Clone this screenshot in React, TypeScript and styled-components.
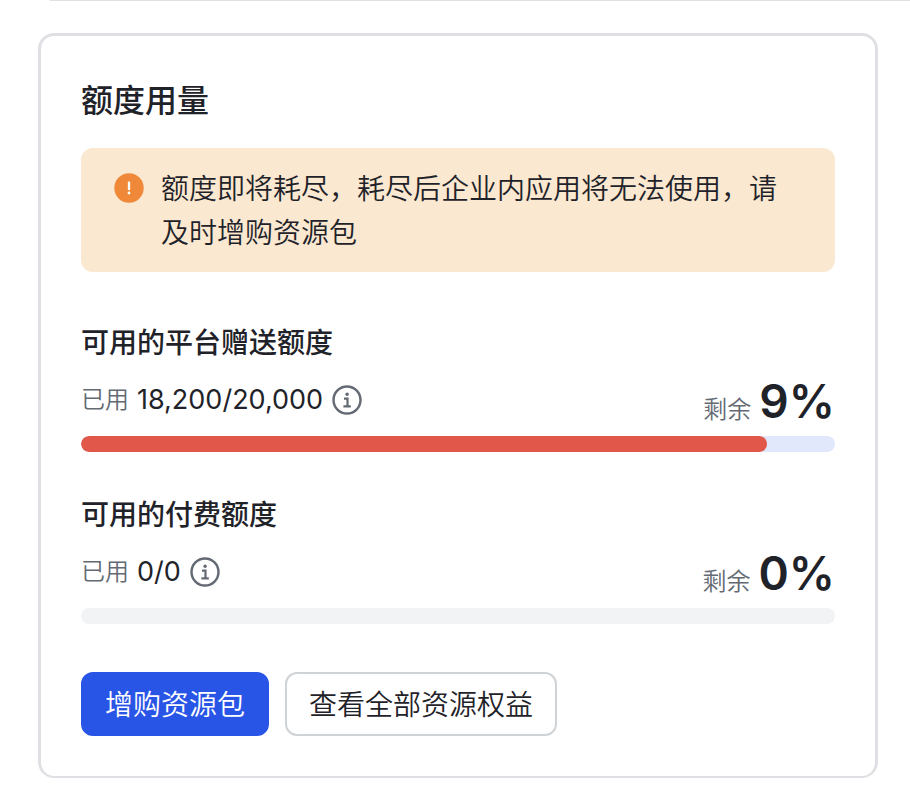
import React, { useId } from 'react';
import styled, { createGlobalStyle } from 'styled-components';

const Global = createGlobalStyle`
  *, *::before, *::after { box-sizing: border-box; }
  body {
    margin: 0;
    background: #ffffff;
    color: #1f2329;
    font-family: Inter, "Noto Sans CJK SC", sans-serif;
  }
  h2, h3, p { margin: 0; }
`;

const Page = styled.main`
  padding-bottom: 32px;
`;

const TopRule = styled.div`
  height: 1px;
  margin-left: 50px;
  background: #dee0e3;
`;

const Card = styled.section`
  margin: 32px 32px 0 38px;
  padding: 40px;
  border: 3px solid #dfe0e3;
  border-bottom-width: 2px;
  border-radius: 16px;
  background: #ffffff;
`;

const CardTitle = styled.h2`
  font-size: 32px;
  line-height: 50px;
  font-weight: 500;
`;

const Alert = styled.div`
  display: flex;
  gap: 16px;
  margin-top: 22px;
  padding: 19px 32px 17px;
  border-radius: 12px;
  background: #fae8d1;
`;

const AlertIcon = styled.svg`
  flex: none;
  width: 32px;
  height: 32px;
  margin-top: 5px;
`;

const AlertText = styled.p`
  font-size: 28px;
  line-height: 44px;
  font-weight: 350;
`;

const Quota = styled.section<{ $first?: boolean }>`
  margin-top: ${({ $first }) => ($first ? 48 : 40)}px;
`;

const QuotaTitle = styled.h3`
  font-size: 28px;
  line-height: 46px;
  font-weight: 500;
`;

const QuotaRow = styled.div`
  display: flex;
  justify-content: space-between;
  height: 70px;
`;

const Used = styled.div`
  display: flex;
  align-items: center;
  height: 68px;
`;

const Caption = styled.span`
  font-size: 24px;
  line-height: 36px;
  font-weight: 350;
  color: #646a73;
`;

const UsedValue = styled.span`
  margin: 0 8px;
  font-size: 27px;
  line-height: 36px;
`;

const InfoButton = styled.button`
  display: flex;
  padding: 0;
  border: 0;
  background: none;
  color: #646a73;
  cursor: pointer;
`;

const Remaining = styled.div`
  display: flex;
  align-items: baseline;
  gap: 8px;
`;

const Percent = styled.strong`
  font-size: 46px;
  line-height: 70px;
  font-weight: 600;
`;

const Track = styled.div<{ $empty: boolean }>`
  height: 16px;
  border-radius: 8px;
  background: ${({ $empty }) => ($empty ? '#f2f3f5' : '#e1e8fb')};
  overflow: hidden;
`;

const Fill = styled.div`
  height: 100%;
  border-radius: 8px;
  background: #e1584a;
`;

const Actions = styled.div`
  display: flex;
  gap: 16px;
  margin-top: 48px;
`;

const ActionButton = styled.button<{ $primary?: boolean }>`
  height: 64px;
  padding: 0 22px 2px;
  border: 2px solid ${({ $primary }) => ($primary ? '#2955e7' : '#d0d3d6')};
  border-radius: 12px;
  background: ${({ $primary }) => ($primary ? '#2955e7' : '#ffffff')};
  color: ${({ $primary }) => ($primary ? '#ffffff' : '#1f2329')};
  font-family: inherit;
  font-size: 28px;
  font-weight: 350;
  cursor: pointer;
`;

function InfoIcon() {
  return (
    <svg width="32" height="32" viewBox="0 0 32 32" fill="none" stroke="currentColor" aria-hidden="true">
      <circle cx="16" cy="16" r="13.5" strokeWidth="2.4" />
      <circle cx="16.1" cy="10.3" r="1.7" fill="currentColor" stroke="none" />
      <path d="M13 14.7h3.5v7.6M12.4 22.3h7.4" strokeWidth="2.2" />
    </svg>
  );
}

interface QuotaProps {
  title: string;
  used: number;
  total: number;
  remaining: number;
  first?: boolean;
}

function QuotaBlock({ title, used, total, remaining, first }: QuotaProps) {
  const id = useId();
  const usedPercent = total ? (used / total) * 100 : 0;
  return (
    <Quota $first={first} aria-labelledby={id}>
      <QuotaTitle id={id}>{title}</QuotaTitle>
      <QuotaRow>
        <Used>
          <Caption>已用</Caption>
          <UsedValue>{used.toLocaleString('en-US')}/{total.toLocaleString('en-US')}</UsedValue>
          <InfoButton type="button" aria-label={title}><InfoIcon /></InfoButton>
        </Used>
        <Remaining>
          <Caption>剩余</Caption>
          <Percent>{remaining}%</Percent>
        </Remaining>
      </QuotaRow>
      <Track $empty={total === 0} role="progressbar" aria-labelledby={id} aria-valuenow={usedPercent} aria-valuemin={0} aria-valuemax={100}>
        {usedPercent > 0 && <Fill style={{ width: `${usedPercent}%` }} />}
      </Track>
    </Quota>
  );
}

export default function App() {
  return (
    <>
      <Global />
      <Page lang="zh-CN">
        <TopRule />
        <Card>
          <CardTitle>额度用量</CardTitle>
          <Alert role="alert">
            <AlertIcon viewBox="0 0 32 32" aria-hidden="true">
              <circle cx="16" cy="16" r="14.7" fill="#ef8838" />
              <path d="M16 9.6v8.5" stroke="#fff" strokeWidth="2.3" />
              <circle cx="16" cy="21" r="1.4" fill="#fff" />
            </AlertIcon>
            <AlertText>额度即将耗尽，耗尽后企业内应用将无法使用，请及时增购资源包</AlertText>
          </Alert>
          <QuotaBlock title="可用的平台赠送额度" used={18200} total={20000} remaining={9} first />
          <QuotaBlock title="可用的付费额度" used={0} total={0} remaining={0} />
          <Actions>
            <ActionButton type="button" $primary>增购资源包</ActionButton>
            <ActionButton type="button">查看全部资源权益</ActionButton>
          </Actions>
        </Card>
      </Page>
    </>
  );
}
